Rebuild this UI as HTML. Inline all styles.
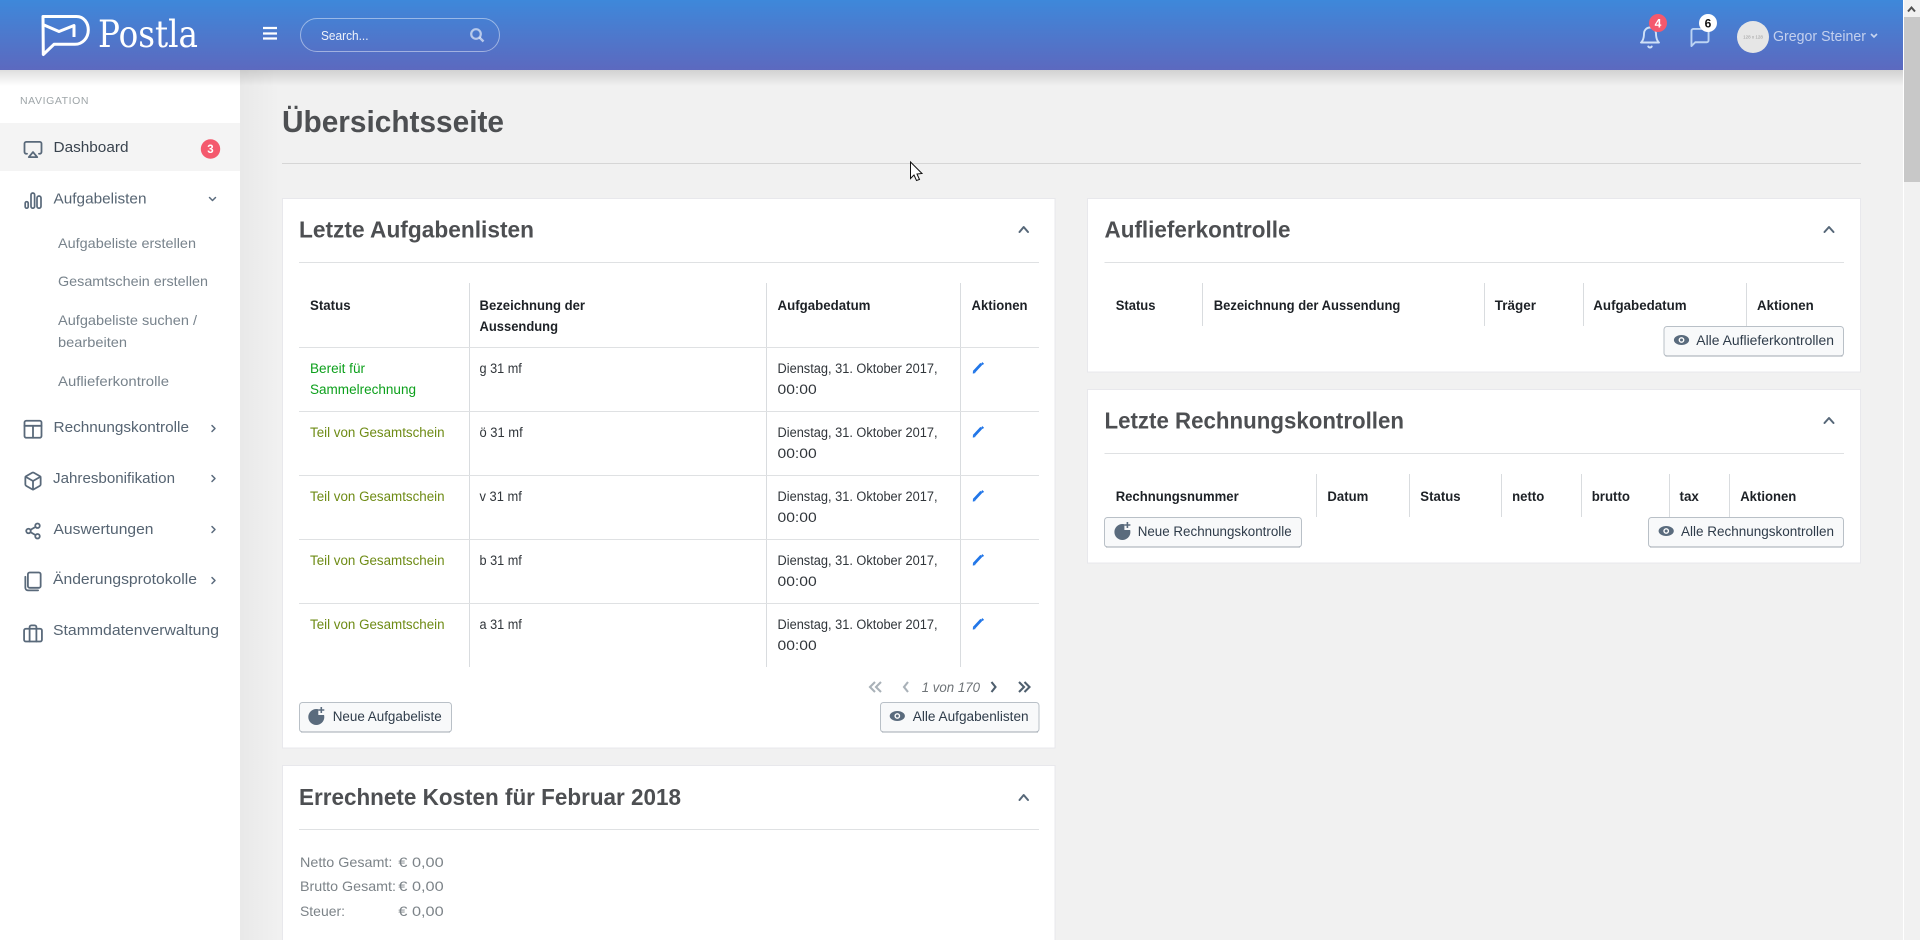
<!DOCTYPE html>
<html lang="de">
<head>
<meta charset="utf-8">
<title>Postla – Übersichtsseite</title>
<style>
html,body{margin:0;padding:0;width:1920px;height:940px;overflow:hidden;background:#f1f1f1}
svg{display:block;position:absolute;left:0;top:0}
text{font-family:"Liberation Sans",sans-serif;white-space:pre}
.nav{font-size:15px;fill:#566472}
.sub{font-size:14px;fill:#78838c}
.h2{font-size:23px;font-weight:700;fill:#4d4f52}
.th{font-size:13.5px;font-weight:700;fill:#1d2126}
.td{font-size:13.5px;fill:#30353a}
.ok{font-size:13.5px;fill:#0da01c}
.part{font-size:13.5px;fill:#6e8b15}
.btn{font-size:13.5px;fill:#2f3c4a}
.cost{font-size:14px;fill:#7c8388}
.ic{fill:none;stroke:#59697a;stroke-width:2.1;stroke-linecap:round;stroke-linejoin:round}
.chev{fill:none;stroke:#5a6b7d;stroke-width:1.5;stroke-linecap:round;stroke-linejoin:round}
.up{fill:none;stroke:#566778;stroke-width:2;stroke-linecap:round;stroke-linejoin:round}
.line{stroke:#dfe1e3;stroke-width:1}
.vline{stroke:#d9dcdf;stroke-width:1}
.card{fill:#fff;stroke:#e8e8ec;stroke-width:1}
.b{fill:#f8f9fa;stroke:#b9c0c7;stroke-width:1}
</style>
</head>
<body>
<svg width="1920" height="940" viewBox="0 0 1920 940" xmlns="http://www.w3.org/2000/svg">
<defs>
<linearGradient id="hdr" x1="0" y1="0" x2="0" y2="1"><stop offset="0" stop-color="#3e88da"/><stop offset="1" stop-color="#5c69bf"/></linearGradient>
<linearGradient id="sh" x1="0" y1="0" x2="0" y2="1"><stop offset="0" stop-color="#000" stop-opacity=".13"/><stop offset="1" stop-color="#000" stop-opacity="0"/></linearGradient>
<linearGradient id="sd" x1="0" y1="0" x2="1" y2="0"><stop offset="0" stop-color="#000" stop-opacity=".035"/><stop offset="1" stop-color="#000" stop-opacity="0"/></linearGradient>
<g id="eye"><ellipse rx="7.6" ry="5" fill="#5a6b7d"/><circle r="2.9" fill="#fff"/><circle r="1.5" fill="#5a6b7d"/></g>
<g id="neu"><circle cx="-0.5" cy="1" r="8" fill="#5a6b7d"/><rect x="1.5" y="-9" width="8" height="8" fill="#f8f9fa"/><path d="M4.5-9V-3M1.5-6H7.5" stroke="#5a6b7d" stroke-width="1.6" fill="none"/></g>
<g id="pen"><path d="M-4.2 3.6L3 -4.2" stroke="#2176e8" stroke-width="2.8" fill="none"/><path d="M-5.6 5.6L-5.4 2.4L-2.8 5Z" fill="#2176e8"/><path d="M3.4 -5.2L5 -3.6" stroke="#2176e8" stroke-width="1.8" fill="none"/></g>
</defs>

<!-- page bg -->
<rect x="0" y="0" width="1920" height="940" fill="#f1f1f1"/>
<rect x="240" y="70" width="40" height="870" fill="url(#sd)"/>
<!-- sidebar -->
<rect x="0" y="70" width="240" height="870" fill="#fff"/>
<rect x="0" y="123" width="240" height="48" fill="#f4f4f4"/>

<!-- scrollbar -->
<rect x="1903" y="0" width="17" height="940" fill="#f1f1f1"/>
<rect x="1903" y="0" width="1" height="940" fill="#fff"/>
<rect x="1904" y="17" width="16" height="165" fill="#c8c8c8"/>
<path d="M1908 11.5L1911.5 7.5L1915 11.5" fill="none" stroke="#505050" stroke-width="2"/>

<!-- title -->
<text x="282" y="132" font-size="31" font-weight="700" fill="#4d4f52" textLength="222" lengthAdjust="spacingAndGlyphs">Übersichtsseite</text>
<line x1="282" y1="163.5" x2="1861" y2="163.5" stroke="#d6d6d6"/>

<!-- Card 1 -->
<rect class="card" x="282.5" y="198.5" width="772.5" height="549.5"/>
<text class="h2" x="299" y="237.5" textLength="235" lengthAdjust="spacingAndGlyphs">Letzte Aufgabenlisten</text>
<path class="up" d="M1019.5 232L1023.7 227L1028 232"/>
<line class="line" x1="299" y1="262.5" x2="1039" y2="262.5"/>
<line class="vline" x1="469.5" y1="283" x2="469.5" y2="667"/>
<line class="vline" x1="766.5" y1="283" x2="766.5" y2="667"/>
<line class="vline" x1="960.5" y1="283" x2="960.5" y2="667"/>
<line class="line" x1="299" y1="347.5" x2="1039" y2="347.5"/>
<line class="line" x1="299" y1="411.5" x2="1039" y2="411.5"/>
<line class="line" x1="299" y1="475.5" x2="1039" y2="475.5"/>
<line class="line" x1="299" y1="539.5" x2="1039" y2="539.5"/>
<line class="line" x1="299" y1="603.5" x2="1039" y2="603.5"/>

<text class="th" x="310" y="310" textLength="40.6" lengthAdjust="spacingAndGlyphs">Status</text>
<text class="th" x="479.5" y="310" textLength="105.5" lengthAdjust="spacingAndGlyphs">Bezeichnung der</text>
<text class="th" x="479.5" y="331" textLength="78.5" lengthAdjust="spacingAndGlyphs">Aussendung</text>
<text class="th" x="777.5" y="310" textLength="93" lengthAdjust="spacingAndGlyphs">Aufgabedatum</text>
<text class="th" x="971.5" y="310" textLength="56" lengthAdjust="spacingAndGlyphs">Aktionen</text>

<text class="ok" x="310" y="373" textLength="55" lengthAdjust="spacingAndGlyphs">Bereit für</text>
<text class="ok" x="310" y="394" textLength="106" lengthAdjust="spacingAndGlyphs">Sammelrechnung</text>
<text class="td" x="479.5" y="373" textLength="42.3" lengthAdjust="spacingAndGlyphs">g 31 mf</text>
<text class="td" x="777.5" y="373" textLength="160" lengthAdjust="spacingAndGlyphs">Dienstag, 31. Oktober 2017,</text>
<text class="td" x="777.5" y="394" textLength="39.2" lengthAdjust="spacingAndGlyphs">00:00</text>
<use href="#pen" x="978.4" y="368"/>

<text class="part" x="310" y="437" textLength="134.6" lengthAdjust="spacingAndGlyphs">Teil von Gesamtschein</text>
<text class="td" x="479.5" y="437" textLength="43.2" lengthAdjust="spacingAndGlyphs">ö 31 mf</text>
<text class="td" x="777.5" y="437" textLength="160" lengthAdjust="spacingAndGlyphs">Dienstag, 31. Oktober 2017,</text>
<text class="td" x="777.5" y="458" textLength="39.2" lengthAdjust="spacingAndGlyphs">00:00</text>
<use href="#pen" x="978.4" y="432"/>

<text class="part" x="310" y="501" textLength="134.6" lengthAdjust="spacingAndGlyphs">Teil von Gesamtschein</text>
<text class="td" x="479.5" y="501" textLength="42.3" lengthAdjust="spacingAndGlyphs">v 31 mf</text>
<text class="td" x="777.5" y="501" textLength="160" lengthAdjust="spacingAndGlyphs">Dienstag, 31. Oktober 2017,</text>
<text class="td" x="777.5" y="522" textLength="39.2" lengthAdjust="spacingAndGlyphs">00:00</text>
<use href="#pen" x="978.4" y="496"/>

<text class="part" x="310" y="565" textLength="134.6" lengthAdjust="spacingAndGlyphs">Teil von Gesamtschein</text>
<text class="td" x="479.5" y="565" textLength="42.3" lengthAdjust="spacingAndGlyphs">b 31 mf</text>
<text class="td" x="777.5" y="565" textLength="160" lengthAdjust="spacingAndGlyphs">Dienstag, 31. Oktober 2017,</text>
<text class="td" x="777.5" y="586" textLength="39.2" lengthAdjust="spacingAndGlyphs">00:00</text>
<use href="#pen" x="978.4" y="560"/>

<text class="part" x="310" y="629" textLength="134.6" lengthAdjust="spacingAndGlyphs">Teil von Gesamtschein</text>
<text class="td" x="479.5" y="629" textLength="42.3" lengthAdjust="spacingAndGlyphs">a 31 mf</text>
<text class="td" x="777.5" y="629" textLength="160" lengthAdjust="spacingAndGlyphs">Dienstag, 31. Oktober 2017,</text>
<text class="td" x="777.5" y="650" textLength="39.2" lengthAdjust="spacingAndGlyphs">00:00</text>
<use href="#pen" x="978.4" y="624"/>

<!-- pagination -->
<path d="M875 682L870 687L875 692M881 682L876 687L881 692M908 682L904 687L908 692" fill="none" stroke="#a9b1b8" stroke-width="2.1"/>
<text x="921.7" y="692" font-size="13.5" font-style="italic" fill="#6f7478" textLength="58.3" lengthAdjust="spacingAndGlyphs">1 von 170</text>
<path d="M991.5 682L995.5 687L991.5 692M1019 682L1024 687L1019 692M1024.5 682L1029.5 687L1024.5 692" fill="none" stroke="#4f5f6e" stroke-width="2.1"/>

<!-- buttons card1 -->
<rect class="b" x="299.5" y="702.5" width="152" height="29.5" rx="3"/>
<line x1="301" y1="732" x2="450" y2="732" stroke="#a0a8b0"/>
<use href="#neu" x="316.8" y="716"/>
<text class="btn" x="332.7" y="721" textLength="109" lengthAdjust="spacingAndGlyphs">Neue Aufgabeliste</text>
<rect class="b" x="880.5" y="702.5" width="158.5" height="29.5" rx="3"/>
<line x1="882" y1="732" x2="1038" y2="732" stroke="#a0a8b0"/>
<use href="#eye" x="897.3" y="716"/>
<text class="btn" x="912.8" y="721" textLength="115.8" lengthAdjust="spacingAndGlyphs">Alle Aufgabenlisten</text>

<!-- Card 3 -->
<rect class="card" x="282.5" y="765.5" width="772.5" height="190"/>
<text class="h2" x="299" y="805" textLength="382" lengthAdjust="spacingAndGlyphs">Errechnete Kosten für Februar 2018</text>
<path class="up" d="M1019.5 800L1023.7 795L1028 800"/>
<line class="line" x1="299" y1="829.5" x2="1039" y2="829.5"/>
<text class="cost" x="300" y="867" textLength="92.4" lengthAdjust="spacingAndGlyphs">Netto Gesamt:</text>
<text class="cost" x="398.4" y="867" textLength="45.3" lengthAdjust="spacingAndGlyphs">€ 0,00</text>
<text class="cost" x="300" y="891" textLength="96" lengthAdjust="spacingAndGlyphs">Brutto Gesamt:</text>
<text class="cost" x="398.4" y="891" textLength="45.3" lengthAdjust="spacingAndGlyphs">€ 0,00</text>
<text class="cost" x="300" y="916" textLength="45" lengthAdjust="spacingAndGlyphs">Steuer:</text>
<text class="cost" x="398.4" y="916" textLength="45.3" lengthAdjust="spacingAndGlyphs">€ 0,00</text>

<!-- Right card 1 -->
<rect class="card" x="1087.5" y="198.5" width="773" height="173.5"/>
<text class="h2" x="1104.5" y="237.5" textLength="186" lengthAdjust="spacingAndGlyphs">Auflieferkontrolle</text>
<path class="up" d="M1824.5 232L1829 227L1833.5 232"/>
<line class="line" x1="1104.5" y1="262.5" x2="1844" y2="262.5"/>
<line class="vline" x1="1202.5" y1="283" x2="1202.5" y2="326"/>
<line class="vline" x1="1484.5" y1="283" x2="1484.5" y2="326"/>
<line class="vline" x1="1583.5" y1="283" x2="1583.5" y2="326"/>
<line class="vline" x1="1746.5" y1="283" x2="1746.5" y2="326"/>
<text class="th" x="1115.7" y="310" textLength="39.8" lengthAdjust="spacingAndGlyphs">Status</text>
<text class="th" x="1213.7" y="310" textLength="186.7" lengthAdjust="spacingAndGlyphs">Bezeichnung der Aussendung</text>
<text class="th" x="1494.8" y="310" textLength="41.2" lengthAdjust="spacingAndGlyphs">Träger</text>
<text class="th" x="1593.3" y="310" textLength="93.3" lengthAdjust="spacingAndGlyphs">Aufgabedatum</text>
<text class="th" x="1757" y="310" textLength="56.7" lengthAdjust="spacingAndGlyphs">Aktionen</text>
<rect class="b" x="1664" y="326.5" width="179.5" height="29.5" rx="3"/>
<line x1="1665.5" y1="356" x2="1842.5" y2="356" stroke="#a0a8b0"/>
<use href="#eye" x="1681.5" y="340"/>
<text class="btn" x="1696.3" y="345" textLength="137.7" lengthAdjust="spacingAndGlyphs">Alle Auflieferkontrollen</text>

<!-- Right card 2 -->
<rect class="card" x="1087.5" y="389.5" width="773" height="173.5"/>
<text class="h2" x="1104.5" y="428.5" textLength="299.5" lengthAdjust="spacingAndGlyphs">Letzte Rechnungskontrollen</text>
<path class="up" d="M1824.5 423L1829 418L1833.5 423"/>
<line class="line" x1="1104.5" y1="453.5" x2="1844" y2="453.5"/>
<line class="vline" x1="1316.5" y1="474" x2="1316.5" y2="517"/>
<line class="vline" x1="1409.5" y1="474" x2="1409.5" y2="517"/>
<line class="vline" x1="1501.5" y1="474" x2="1501.5" y2="517"/>
<line class="vline" x1="1581.5" y1="474" x2="1581.5" y2="517"/>
<line class="vline" x1="1669.5" y1="474" x2="1669.5" y2="517"/>
<line class="vline" x1="1729.5" y1="474" x2="1729.5" y2="517"/>
<text class="th" x="1115.7" y="501" textLength="123" lengthAdjust="spacingAndGlyphs">Rechnungsnummer</text>
<text class="th" x="1327.4" y="501" textLength="40.9" lengthAdjust="spacingAndGlyphs">Datum</text>
<text class="th" x="1420.3" y="501" textLength="40.3" lengthAdjust="spacingAndGlyphs">Status</text>
<text class="th" x="1512.1" y="501" textLength="32.2" lengthAdjust="spacingAndGlyphs">netto</text>
<text class="th" x="1591.7" y="501" textLength="38.3" lengthAdjust="spacingAndGlyphs">brutto</text>
<text class="th" x="1679.5" y="501" textLength="19.4" lengthAdjust="spacingAndGlyphs">tax</text>
<text class="th" x="1740.2" y="501" textLength="56.1" lengthAdjust="spacingAndGlyphs">Aktionen</text>
<rect class="b" x="1104.5" y="517.5" width="197" height="29.5" rx="3"/>
<line x1="1106" y1="547" x2="1300" y2="547" stroke="#a0a8b0"/>
<use href="#neu" x="1122.9" y="531"/>
<text class="btn" x="1137.7" y="536" textLength="154" lengthAdjust="spacingAndGlyphs">Neue Rechnungskontrolle</text>
<rect class="b" x="1648.5" y="517.5" width="195" height="29.5" rx="3"/>
<line x1="1650" y1="547" x2="1842" y2="547" stroke="#a0a8b0"/>
<use href="#eye" x="1666.2" y="531"/>
<text class="btn" x="1681" y="536" textLength="153" lengthAdjust="spacingAndGlyphs">Alle Rechnungskontrollen</text>

<!-- Sidebar content -->
<text x="20" y="104" font-size="10.5" fill="#9ea5a8" textLength="68.5" lengthAdjust="spacing">NAVIGATION</text>

<text class="nav" x="53.5" y="152" style="fill:#39434e" textLength="75" lengthAdjust="spacingAndGlyphs">Dashboard</text>
<circle cx="210.5" cy="149" r="9.7" fill="#f4596d"/>
<text x="210.5" y="153" font-size="11.5" font-weight="700" fill="#fff" text-anchor="middle">3</text>
<g transform="translate(22.8,139.3) scale(.85)" class="ic"><path d="M5 17H4a2 2 0 0 1-2-2V5a2 2 0 0 1 2-2h16a2 2 0 0 1 2 2v10a2 2 0 0 1-2 2h-1"/><path d="M12 15L17 21H7Z"/></g>

<text class="nav" x="53.5" y="203.5" textLength="93" lengthAdjust="spacingAndGlyphs">Aufgabelisten</text>
<path class="chev" d="M209.5 197.5L212.5 200.5L215.5 197.5"/>
<g class="ic" style="stroke-width:1.7">
<rect x="25.2" y="201.7" width="3" height="6.5" rx="1.5"/>
<rect x="31" y="193" width="3.6" height="15.2" rx="1.8"/>
<rect x="37" y="196" width="4" height="12.2" rx="2"/>
</g>

<text class="sub" x="58" y="248" textLength="138" lengthAdjust="spacingAndGlyphs">Aufgabeliste erstellen</text>
<text class="sub" x="58" y="286" textLength="150" lengthAdjust="spacingAndGlyphs">Gesamtschein erstellen</text>
<text class="sub" x="58" y="325" textLength="139" lengthAdjust="spacingAndGlyphs">Aufgabeliste suchen /</text>
<text class="sub" x="58" y="347" textLength="69" lengthAdjust="spacingAndGlyphs">bearbeiten</text>
<text class="sub" x="58" y="386" textLength="111" lengthAdjust="spacingAndGlyphs">Auflieferkontrolle</text>

<text class="nav" x="53.5" y="432" textLength="135.5" lengthAdjust="spacingAndGlyphs">Rechnungskontrolle</text>
<path class="chev" d="M212 425.5L215 428.5L212 431.5"/>
<g transform="translate(22.8,418.6) scale(.85)" class="ic"><rect x="2" y="2.5" width="20" height="20" rx="2"/><line x1="2" y1="8.5" x2="22" y2="8.5"/><line x1="12" y1="8.5" x2="12" y2="22.5"/></g>

<text class="nav" x="53" y="483" textLength="122" lengthAdjust="spacingAndGlyphs">Jahresbonifikation</text>
<path class="chev" d="M212 475.5L215 478.5L212 481.5"/>
<g transform="translate(22.8,470.8) scale(.85)" class="ic"><path d="M21 16V8a2 2 0 0 0-1-1.73l-7-4a2 2 0 0 0-2 0l-7 4A2 2 0 0 0 3 8v8a2 2 0 0 0 1 1.73l7 4a2 2 0 0 0 2 0l7-4A2 2 0 0 0 21 16z"/><path d="M3.27 6.96L12 12.01L20.73 6.96"/><line x1="12" y1="22.08" x2="12" y2="12"/></g>

<text class="nav" x="53.5" y="534" textLength="100" lengthAdjust="spacingAndGlyphs">Auswertungen</text>
<path class="chev" d="M212 526.5L215 529.5L212 532.5"/>
<g transform="translate(24,522) scale(.75)" class="ic" style="stroke-width:2.4"><circle cx="18" cy="5" r="3"/><circle cx="6" cy="12" r="3"/><circle cx="18" cy="19" r="3"/><line x1="8.59" y1="13.51" x2="15.42" y2="17.49"/><line x1="15.41" y1="6.51" x2="8.59" y2="10.49"/></g>

<text class="nav" x="53" y="584" textLength="144" lengthAdjust="spacingAndGlyphs">Änderungsprotokolle</text>
<path class="chev" d="M212 577.5L215 580.5L212 583.5"/>
<g transform="translate(22.8,570.8) scale(.85)" class="ic"><rect x="6" y="2" width="15" height="18" rx="2"/><path d="M3 7v13a3 3 0 0 0 3 3h12"/></g>

<text class="nav" x="53" y="635" textLength="166" lengthAdjust="spacingAndGlyphs">Stammdatenverwaltung</text>
<g transform="translate(22.8,622.8) scale(.85)" class="ic"><rect x="1.5" y="7" width="21" height="15" rx="2"/><path d="M16 22V5a2 2 0 0 0-2-2h-4a2 2 0 0 0-2 2v17"/></g>

<!-- header shadow -->
<rect x="0" y="70" width="1903" height="16" fill="url(#sh)"/>

<!-- header -->
<rect x="0" y="0" width="1903" height="70" fill="url(#hdr)"/>
<!-- logo -->
<path d="M43 16.5H76.5C84 16.5 88.3 23 88.3 30C88.3 38 82.5 44.3 75 44.3H54L43.3 54.5Z" fill="none" stroke="#fff" stroke-width="3" stroke-linejoin="round"/>
<path d="M44 25L59 31.5L74 25.5V37" fill="none" stroke="#fff" stroke-width="3" stroke-linejoin="round"/>
<text x="98" y="47" style="font-family:'DejaVu Serif',serif" font-size="37" fill="#fff" textLength="100" lengthAdjust="spacingAndGlyphs">Postla</text>
<!-- hamburger -->
<path d="M263 28H277M263 33.5H277M263 38.5H277" stroke="#fff" stroke-width="2.3"/>
<!-- search -->
<rect x="300.5" y="18.5" width="199" height="33" rx="16.5" fill="none" stroke="#fff" stroke-opacity=".45"/>
<text x="321" y="40" font-size="12.5" fill="#fff" fill-opacity=".9" textLength="47.5" lengthAdjust="spacingAndGlyphs">Search...</text>
<circle cx="476" cy="34" r="4.8" fill="none" stroke="#fff" stroke-opacity=".6" stroke-width="2.2"/>
<path d="M479.5 37.5L483.5 41.5" stroke="#fff" stroke-opacity=".6" stroke-width="2.4"/>
<!-- bell -->
<g transform="translate(1638,25.5)" fill="none" stroke="#cfe0f7" stroke-width="1.9" stroke-linecap="round" stroke-linejoin="round"><path d="M18 8A6 6 0 0 0 6 8c0 7-3 9-3 9h18s-3-2-3-9"/><path d="M13.73 21a2 2 0 0 1-3.46 0"/></g>
<circle cx="1658" cy="23" r="9" fill="#f4596d"/>
<text x="1658" y="27.5" font-size="12" font-weight="700" fill="#fff" text-anchor="middle">4</text>
<!-- chat -->
<g transform="translate(1688.6,26.1) scale(.95)" fill="none" stroke="#bcd4f3" stroke-width="2" stroke-linecap="round" stroke-linejoin="round"><path d="M21 15a2 2 0 0 1-2 2H7l-4 4V5a2 2 0 0 1 2-2h14a2 2 0 0 1 2 2z"/></g>
<circle cx="1708" cy="23" r="9" fill="#fff"/>
<text x="1708" y="27.5" font-size="12" font-weight="700" fill="#111" text-anchor="middle">6</text>
<!-- avatar -->
<circle cx="1753" cy="37" r="16" fill="#e6e6e6"/>
<text x="1753" y="38.5" font-size="4.5" fill="#9a9a9a" text-anchor="middle">128 x 128</text>
<text x="1773" y="41" font-size="14.5" fill="#c3d0ee" textLength="93" lengthAdjust="spacingAndGlyphs">Gregor Steiner</text>
<path d="M1871 34L1874 37L1877 34" fill="none" stroke="#c9d6f0" stroke-width="1.6"/>

<!-- cursor -->
<path d="M910.5 162V178.5L914 175L916.5 180.5L919.5 179.5L917 174L922 173.5Z" fill="#fff" stroke="#111" stroke-width="1"/>
</svg>
</body>
</html>
